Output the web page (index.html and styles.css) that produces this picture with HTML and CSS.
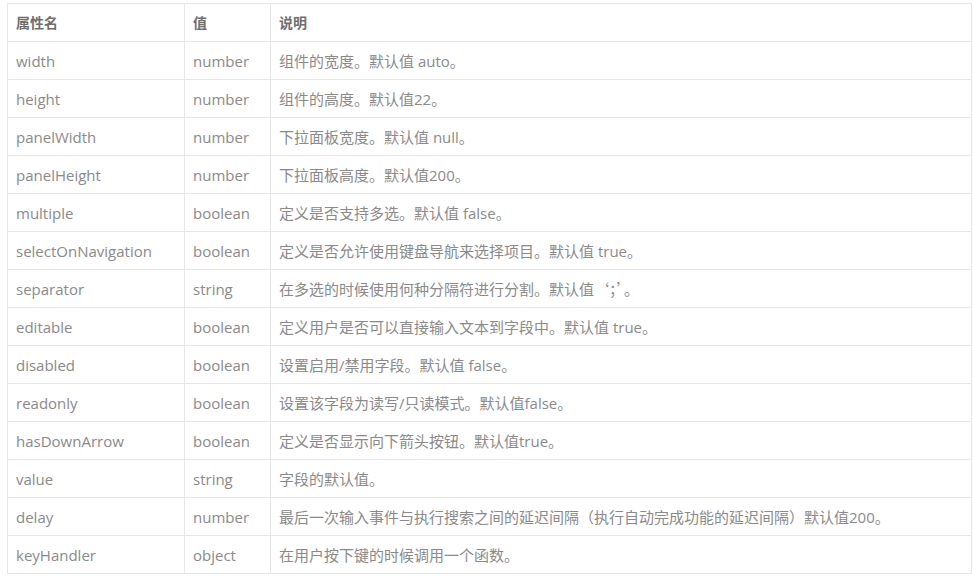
FILE: index.html
```html
<!DOCTYPE html>
<html lang="zh">
<head>
<meta charset="utf-8">
<link rel="stylesheet" href="styles.css">
</head>
<body>
<table class="props">
  <colgroup><col class="c1"><col class="c2"><col class="c3"></colgroup>
  <thead>
    <tr><th>属性名</th><th>值</th><th>说明</th></tr>
  </thead>
  <tbody>
    <tr><td>width</td><td>number</td><td>组件的宽度。默认值 auto。</td></tr>
    <tr><td>height</td><td>number</td><td>组件的高度。默认值22。</td></tr>
    <tr><td>panelWidth</td><td>number</td><td>下拉面板宽度。默认值 null。</td></tr>
    <tr><td>panelHeight</td><td>number</td><td>下拉面板高度。默认值200。</td></tr>
    <tr><td>multiple</td><td>boolean</td><td>定义是否支持多选。默认值 false。</td></tr>
    <tr><td>selectOnNavigation</td><td>boolean</td><td>定义是否允许使用键盘导航来选择项目。默认值 true。</td></tr>
    <tr><td>separator</td><td>string</td><td>在多选的时候使用何种分隔符进行分割。默认值<span class="cjk">‘；’。</span></td></tr>
    <tr><td>editable</td><td>boolean</td><td>定义用户是否可以直接输入文本到字段中。默认值 true。</td></tr>
    <tr><td>disabled</td><td>boolean</td><td>设置启用/禁用字段。默认值 false。</td></tr>
    <tr><td>readonly</td><td>boolean</td><td>设置该字段为读写/只读模式。默认值false。</td></tr>
    <tr><td>hasDownArrow</td><td>boolean</td><td>定义是否显示向下箭头按钮。默认值true。</td></tr>
    <tr><td>value</td><td>string</td><td>字段的默认值。</td></tr>
    <tr><td>delay</td><td>number</td><td>最后一次输入事件与执行搜索之间的延迟间隔（执行自动完成功能的延迟间隔）默认值200。</td></tr>
    <tr><td>keyHandler</td><td>object</td><td>在用户按下键的时候调用一个函数。</td></tr>
  </tbody>
</table>
</body>
</html>
```
FILE: styles.css
```css
html, body {
  margin: 0;
  background: #fff;
}
body {
  padding: 3px 0 0 7px;
  font-family: "Open Sans", "Noto Sans CJK SC", sans-serif;
  font-size: 15px;
  color: #8a8a8a;
}
.props {
  border-collapse: collapse;
  table-layout: fixed;
  width: 964px;
  border: 1px solid #e6e6e6;
}
.c1 { width: 177px; }
.c2 { width: 86px; }
.c3 { width: 701px; }
.props th,
.props td {
  border: 1px solid #e6e6e6;
  height: 38px;
  padding: 0 0 0 8px;
  box-sizing: border-box;
  text-align: left;
  vertical-align: middle;
  white-space: nowrap;
  line-height: 20px;
}
.props th {
  font-weight: bold;
  color: #6f6f6f;
  font-size: 14px;
}
.cjk {
  font-family: "Noto Sans CJK SC", sans-serif;
}
```
